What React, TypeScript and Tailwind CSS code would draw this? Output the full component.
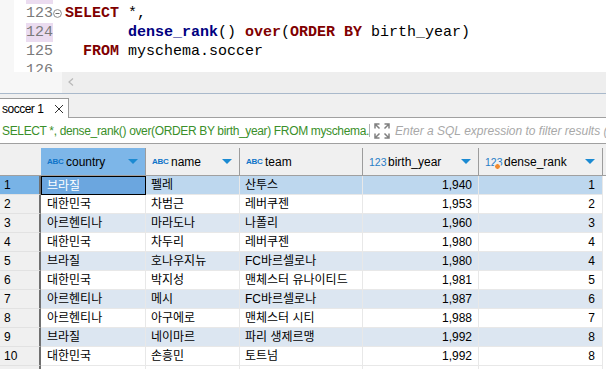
import React from "react";

const rows: string[][] = [
  ["브라질", "펠레", "산투스", "1,940", "1"],
  ["대한민국", "차범근", "레버쿠젠", "1,953", "2"],
  ["아르헨티나", "마라도나", "나폴리", "1,960", "3"],
  ["대한민국", "차두리", "레버쿠젠", "1,980", "4"],
  ["브라질", "호나우지뉴", "FC바르셀로나", "1,980", "4"],
  ["대한민국", "박지성", "맨체스터 유나이티드", "1,981", "5"],
  ["아르헨티나", "메시", "FC바르셀로나", "1,987", "6"],
  ["아르헨티나", "아구에로", "맨체스터 시티", "1,988", "7"],
  ["브라질", "네이마르", "파리 생제르맹", "1,992", "8"],
  ["대한민국", "손흥민", "토트넘", "1,992", "8"],
];

const K = "font-bold text-[#800000]";

function Line({ n, hl, fold, children }: { n?: number; hl?: boolean; fold?: boolean; children?: React.ReactNode }) {
  return (
    <div className="flex h-[19px] items-center">
      <div className="w-[39px] pl-[12px] h-[19px] flex items-center">
        <div className={"w-[27px] h-[19px] leading-[19px] text-[#7a7a7a] " + (hl ? "bg-[#ebdcf0]" : "")}>{n}</div>
      </div>
      <div className="w-[9px] h-[19px] flex items-center">
        {fold && (
          <svg width="9" height="9" viewBox="0 0 9 9">
            <circle cx="4.5" cy="4.5" r="3.9" fill="white" stroke="#8a8a8a" strokeWidth="1" />
            <line x1="2.5" y1="4.5" x2="6.5" y2="4.5" stroke="#6a6a6a" strokeWidth="1" />
          </svg>
        )}
      </div>
      <div className="pl-[3px] whitespace-pre text-black">{children}</div>
    </div>
  );
}

function Tri() {
  return (
    <svg width="10" height="5" viewBox="0 0 10 5" className="ml-auto shrink-0">
      <polygon points="0,0 10,0 5,5" fill="#1b8ad2" />
    </svg>
  );
}

function AbcHead({ label, w, sel }: { label: string; w: string; sel?: boolean }) {
  return (
    <div className={`${w} h-full flex items-center pl-[6px] pr-[7px] border-r border-[#9c9c9c] ${sel ? "bg-[#7db6e8]" : ""}`}>
      <span className="w-[15px] mr-[4px] text-[8px] font-bold leading-none text-[#0f74c8] tracking-[-0.3px]">ABC</span>
      <span className="text-[12px] text-black">{label}</span>
      {label !== "team" && <Tri />}
    </div>
  );
}

function NumHead({ label, w, dot }: { label: string; w: string; dot?: boolean }) {
  return (
    <div className={`${w} h-full flex items-center pl-[6px] pr-[7px] border-r border-[#9c9c9c]`}>
      <span className="relative block w-[16px] mr-[3px] h-[12px] leading-[12px] text-[10.5px] text-[#2a7ec6]">
        123
        {dot && (
          <span className="absolute left-[9px] top-[7px] w-[7px] h-[7px] rounded-full bg-[#f0892e] border border-white" />
        )}
      </span>
      <span className="text-[12px] text-black">{label}</span>
      <Tri />
    </div>
  );
}

export default function App() {
  return (
    <div className="w-[606px] h-[369px] overflow-hidden bg-[#f0f0f0] flex flex-col font-['Liberation_Sans','Noto_Sans_CJK_KR',sans-serif]">
      {/* Editor */}
      <div className="h-[72px] shrink-0 flex bg-white overflow-hidden font-['Liberation_Mono',monospace] text-[15px] leading-[19px]">
        <div className="w-[14px] bg-[#f7f7f7] shrink-0" />
        <div className="flex-1 flex flex-col -mt-[15px]">
          <Line hl />
          <Line n={123} fold>
            <span className={K}>SELECT</span> *,
          </Line>
          <Line n={124} hl>
            {"       "}
            <span className="font-bold text-[#000080]">dense_rank</span>() <span className={K}>over</span>(
            <span className={K}>ORDER BY</span> birth_year)
          </Line>
          <Line n={125}>
            {"  "}
            <span className={K}>FROM</span> myschema.soccer
          </Line>
          <Line n={126} />
        </div>
      </div>
      {/* scroll bar */}
      <div className="h-[21px] shrink-0 flex">
        <div className="w-[62px] bg-[#f7f7f7]" />
        <div className="flex-1 bg-[#eeeeee] flex items-center pl-[6px] pb-[2px]">
          <svg width="6" height="8" viewBox="0 0 6 8">
            <polyline points="5,0.5 1,4 5,7.5" fill="none" stroke="#b8b8b8" strokeWidth="1.2" />
          </svg>
        </div>
      </div>
      <div className="h-px shrink-0 bg-[#a9b9cb]" />
      {/* tab strip */}
      <div className="h-[24px] shrink-0 flex items-end">
        <div className="w-[69px] h-[20px] bg-white border-t border-r border-[#9a9a9a] flex items-center pl-[2px]">
          <span className="text-[12px] tracking-[-0.5px] text-black">soccer 1</span>
          <svg width="10" height="10" viewBox="0 0 10 10" className="ml-[11px]">
            <path d="M1 1L9 9M9 1L1 9" stroke="#333" strokeWidth="1" />
          </svg>
        </div>
        <div className="flex-1 h-full border-b border-[#a0a0a0]" />
      </div>
      {/* filter */}
      <div className="h-[26px] shrink-0 bg-white border-b border-[#a0a0a0] flex items-center overflow-hidden">
        <div className="w-[369px] shrink-0 overflow-hidden whitespace-nowrap pl-[2px] text-[12px] tracking-[-0.35px] text-[#3a8f2a]">
          SELECT *, dense_rank() over(ORDER BY birth_year) FROM myschema.soccer
        </div>
        <div className="w-px h-[13px] shrink-0 bg-[#b4b4b4]" />
        <svg width="16" height="16" viewBox="0 0 16 16" className="ml-[4px] shrink-0">
          <g fill="none" stroke="#808080" strokeWidth="1.5">
            <path d="M1 5.5V1h4.5M1 1l4.5 4.5" />
            <path d="M10.5 1H15v4.5M15 1l-4.5 4.5" />
            <path d="M1 10.5V15h4.5M1 15l4.5-4.5" />
            <path d="M10.5 15H15v-4.5M15 15l-4.5-4.5" />
          </g>
        </svg>
        <div className="ml-[5px] shrink-0 whitespace-nowrap italic text-[12px] text-[#a8a8a8]">
          Enter a SQL expression to filter results (use Ctrl+Space)
        </div>
      </div>
      <div className="h-[4px] shrink-0" />
      {/* header */}
      <div className="h-[28px] shrink-0 flex border-b border-[#a0a0a0]">
        <div className="w-[41px] h-full" />
        <AbcHead label="country" w="w-[105px]" sel />
        <AbcHead label="name" w="w-[94px]" />
        <AbcHead label="team" w="w-[123px]" />
        <NumHead label="birth_year" w="w-[116px]" />
        <NumHead label="dense_rank" w="w-[124px]" dot />
      </div>
      {/* body */}
      <div className="flex-1 flex flex-col bg-white text-[12px] text-black">
        {rows.map((r, i) => {
          const sel = i === 0;
          const bg = sel ? "bg-[#bdd7ee]" : i % 2 === 0 ? "bg-[#dce6f1]" : "bg-white";
          const cell = `h-[19px] border-r border-b border-[#e8e8e8] flex items-center whitespace-nowrap overflow-hidden leading-[18px] ${bg}`;
          return (
            <div key={i} className="flex h-[19px] shrink-0">
              <div className={`w-[41px] h-[19px] border-r-2 border-r-[#707070] border-b border-b-[#e2e2e2] flex items-center pl-[4px] ${sel ? "bg-[#78b3e6]" : "bg-[#f0f0f0]"}`}>
                {i + 1}
              </div>
              {sel ? (
                <div className="w-[105px] h-[19px] border border-black bg-[#6ba6df] text-white flex items-center pl-[5px] leading-[18px]">
                  {r[0]}
                </div>
              ) : (
                <div className={`w-[105px] pl-[6px] ${cell}`}>{r[0]}</div>
              )}
              <div className={`w-[94px] pl-[5px] ${cell}`}>{r[1]}</div>
              <div className={`w-[123px] pl-[5px] ${cell}`}>{r[2]}</div>
              <div className={`w-[116px] pr-[6px] justify-end ${cell}`}>{r[3]}</div>
              <div className={`w-[124px] pr-[7px] justify-end ${cell}`}>{r[4]}</div>
            </div>
          );
        })}
        <div className="flex flex-1">
          <div className="w-[41px] border-r-2 border-r-[#707070] bg-[#f0f0f0]" />
          <div className="w-[105px] border-r border-[#e8e8e8]" />
          <div className="w-[94px] border-r border-[#e8e8e8]" />
          <div className="w-[123px] border-r border-[#e8e8e8]" />
          <div className="w-[116px] border-r border-[#e8e8e8]" />
          <div className="w-[124px] border-r border-[#e8e8e8]" />
        </div>
      </div>
    </div>
  );
}
